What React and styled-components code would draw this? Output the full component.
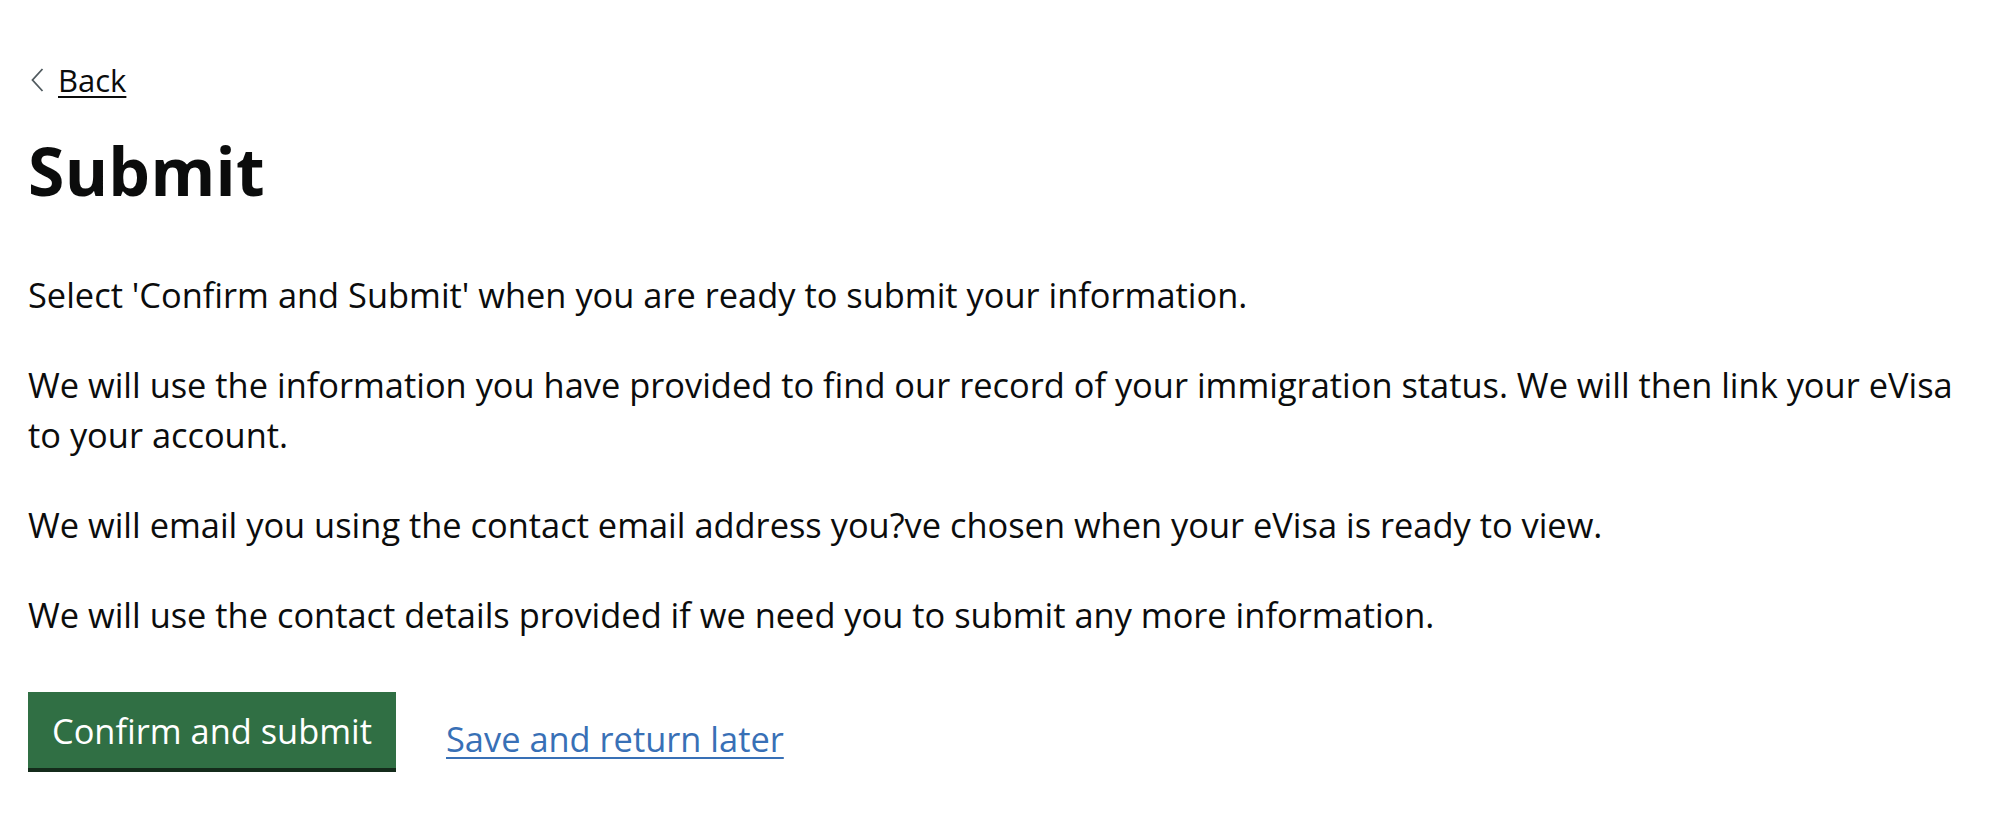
import React from "react";
import styled, { createGlobalStyle } from "styled-components";

const Global = createGlobalStyle`
  html, body { margin: 0; padding: 0; background: #ffffff; }
  body { font-family: "Open Sans", "Noto Sans", sans-serif; color: #0b0c0c; }
`;

const Page = styled.main`
  padding: 60px 20px 40px 28px;
`;

const BackLink = styled.a`
  display: inline-flex;
  align-items: center;
  gap: 14px;
  font-size: 31px;
  line-height: 40px;
  color: #0b0c0c;
  text-decoration: none;
  padding-left: 3px;
  cursor: pointer;
`;

const BackText = styled.span`
  text-decoration: underline;
  text-decoration-thickness: 2px;
  text-underline-offset: 4px;
`;

const Heading = styled.h1`
  margin: 30px 0 60px 0;
  font-size: 66px;
  line-height: 80px;
  font-weight: 700;
  letter-spacing: 0.3px;
`;

const Body = styled.p`
  margin: 0 0 40px 0;
  font-size: 34.4px;
  line-height: 50px;
`;

const Actions = styled.div`
  display: flex;
  align-items: flex-start;
  gap: 50px;
  margin-top: 52px;
`;

const Button = styled.button`
  font-family: "Open Sans", "Noto Sans", sans-serif;
  font-size: 34.4px;
  line-height: 38px;
  color: #ffffff;
  background: #306f44;
  border: 4px solid transparent;
  padding: 16px 20px 14px 20px;
  border-radius: 0;
  box-shadow: 0 4px 0 #142b1b;
  cursor: pointer;
`;

const SecondaryLink = styled.a`
  margin-top: 22px;
  font-size: 34.4px;
  line-height: 50px;
  color: #3870b6;
  text-decoration: underline;
  text-decoration-thickness: 2px;
  text-underline-offset: 5px;
  cursor: pointer;
`;

const Chevron = () => (
  <svg width="13" height="24" viewBox="0 0 13 24" aria-hidden="true">
    <polyline points="11.5,1 1.5,12 11.5,23" fill="none" stroke="#505a5f" strokeWidth="1.8" />
  </svg>
);

export default function App() {
  return (
    <>
      <Global />
      <Page>
        <BackLink>
          <Chevron />
          <BackText>Back</BackText>
        </BackLink>
        <Heading>Submit</Heading>
        <Body>Select 'Confirm and Submit' when you are ready to submit your information.</Body>
        <Body>
          We will use the information you have provided to find our record of your immigration status. We will then link your eVisa to your account.
        </Body>
        <Body>We will email you using the contact email address you?ve chosen when your eVisa is ready to view.</Body>
        <Body>We will use the contact details provided if we need you to submit any more information.</Body>
        <Actions>
          <Button type="button">Confirm and submit</Button>
          <SecondaryLink>Save and return later</SecondaryLink>
        </Actions>
      </Page>
    </>
  );
}
